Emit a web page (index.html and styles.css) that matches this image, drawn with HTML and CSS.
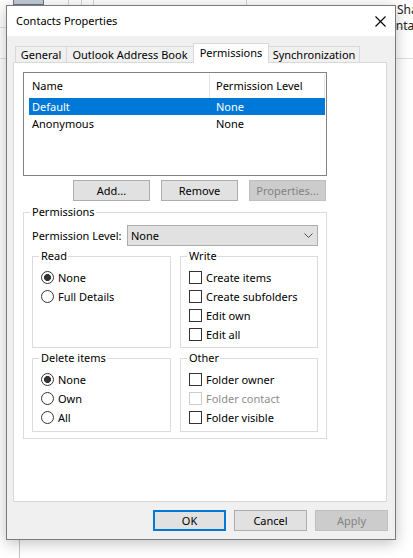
FILE: index.html
```html
<!DOCTYPE html>
<html>
<head>
<meta charset="utf-8">
<title>Contacts Properties</title>
<link rel="stylesheet" href="styles.css">
</head>
<body>
<div class="app-btn"></div>
<div class="vline v1"></div>
<div class="vline v2"></div>
<div class="vline v3"></div>
<div class="vline v4"></div>
<div class="hline h1"></div>
<div class="hline h2"></div>
<div class="app-text t1">Share</div>
<div class="app-text t2">Contacts</div>
<div class="vline-bottom"></div>

<div class="dialog">
  <div class="titlebar">
    <span class="title">Contacts Properties</span>
    <svg class="close" width="11" height="11" viewBox="0 0 11 11"><path d="M0.5 0.5 L10.5 10.5 M10.5 0.5 L0.5 10.5" stroke="#000" stroke-width="1.1" fill="none"/></svg>
  </div>
  <div class="client">
    <div class="tabs">
      <div class="tab w1">General</div>
      <div class="tab w2">Outlook Address Book</div>
      <div class="tab sel w3">Permissions</div>
      <div class="tab w4">Synchronization</div>
    </div>
    <div class="panel">
      <div class="listview">
        <div class="lv-head">
          <div class="lv-col c1">Name</div>
          <div class="lv-col c2">Permission Level</div>
        </div>
        <div class="lv-row selected"><span class="cell1">Default</span><span>None</span></div>
        <div class="lv-row"><span class="cell1">Anonymous</span><span>None</span></div>
      </div>
      <div class="btnrow">
        <div class="btn wide">Add...</div>
        <div class="btn wide">Remove</div>
        <div class="btn wide dis">Properties...</div>
      </div>
      <div class="group perm">
        <span class="legend">Permissions</span>
        <div class="level-row">
          <span>Permission Level:</span>
          <div class="combo"><span>None</span><svg class="chev" width="9" height="5" viewBox="0 0 9 5"><polyline points="0.5,0.5 4.5,4.5 8.5,0.5" fill="none" stroke="#505050" stroke-width="1"/></svg></div>
        </div>
        <div class="subgrid">
          <div class="group sub">
            <span class="legend">Read</span>
            <div class="opt"><span class="radio on"></span>None</div>
            <div class="opt"><span class="radio"></span>Full Details</div>
          </div>
          <div class="group sub">
            <span class="legend">Write</span>
            <div class="opt"><span class="check"></span>Create items</div>
            <div class="opt"><span class="check"></span>Create subfolders</div>
            <div class="opt"><span class="check"></span>Edit own</div>
            <div class="opt"><span class="check"></span>Edit all</div>
          </div>
          <div class="group sub">
            <span class="legend">Delete items</span>
            <div class="opt"><span class="radio on"></span>None</div>
            <div class="opt"><span class="radio"></span>Own</div>
            <div class="opt"><span class="radio"></span>All</div>
          </div>
          <div class="group sub">
            <span class="legend">Other</span>
            <div class="opt"><span class="check"></span>Folder owner</div>
            <div class="opt dis"><span class="check"></span>Folder contact</div>
            <div class="opt"><span class="check"></span>Folder visible</div>
          </div>
        </div>
      </div>
    </div>
    <div class="footer">
      <div class="btn fbtn def">OK</div>
      <div class="btn fbtn">Cancel</div>
      <div class="btn fbtn dis">Apply</div>
    </div>
  </div>
</div>
</body>
</html>
```

FILE: styles.css
```css
* { box-sizing: border-box; }
html, body { margin: 0; padding: 0; }
body {
  width: 413px;
  height: 558px;
  overflow: hidden;
  background: #fff;
  position: relative;
  font-family: "Noto Sans", "DejaVu Sans", sans-serif;
  font-size: 11px;
  color: #000;
}

/* underlying application (free canvas behind the dialog) */
.app-btn { position: absolute; left: 13px; top: -2px; width: 31px; height: 7px; background: #c3ccd6; border: 1px solid #6d7885; }
.vline { position: absolute; top: 0; width: 1px; height: 5px; background: #d4d4d4; }
.v1 { left: 68px; }
.v2 { left: 81px; }
.v3 { left: 93px; }
.v4 { left: 246px; }
.hline { position: absolute; left: 0; width: 413px; height: 1px; background: #e1e1e1; }
.h1 { top: 27px; }
.h2 { top: 58px; }
.app-text { position: absolute; font-size: 12px; line-height: 16px; color: #222; white-space: nowrap; }
.t1 { left: 397px; top: 2px; }
.t2 { left: 381px; top: 18px; }
.vline-bottom { position: absolute; left: 19px; top: 539px; width: 1px; height: 19px; background: #c4c4c4; }

/* dialog window */
.dialog {
  position: absolute;
  left: 6px;
  top: 5px;
  width: 390px;
  height: 535px;
  border: 1px solid #7a7a7a;
  background: #f0f0f0;
  box-shadow: 0 3px 14px rgba(0, 0, 0, .25);
  display: flex;
  flex-direction: column;
  z-index: 2;
}
.titlebar {
  flex: none;
  height: 30px;
  background: #fff;
  display: flex;
  align-items: center;
  justify-content: space-between;
  padding: 0 9px 0 9px;
}
.title { line-height: 16px; }
.close { display: block; }

.client {
  flex: 1;
  display: flex;
  flex-direction: column;
  padding: 7px 8px 8px 6px;
}

.tabs { display: flex; align-items: flex-end; height: 19px; padding-left: 2px; flex: none; }
.tab {
  height: 16px;
  border: 1px solid #d9d9d9;
  border-bottom: none;
  background: #f0f0f0;
  line-height: 14px;
  padding-top: 1px;
  text-align: center;
  margin-left: -1px;
  white-space: nowrap;
}
.tab:first-child { margin-left: 0; }
.tab.sel { height: 20px; margin-bottom: -1px; background: #fff; position: relative; z-index: 1; line-height: 16px; }
.w1 { width: 52px; }
.w2 { width: 128px; }
.w3 { width: 76px; }
.w4 { width: 92px; }

.panel {
  flex: none;
  height: 440px;
  border: 1px solid #d9d9d9;
  background: #fff;
  padding: 9px 0 0 9px;
}

.listview { width: 304px; height: 104px; border: 1px solid #828282; background: #fff; }
.lv-head { display: flex; height: 25px; }
.lv-col { margin-top: 1px; height: 24px; line-height: 24px; border-right: 1px solid #e5e5e5; white-space: nowrap; }
.c1 { width: 186px; padding-left: 8px; }
.c2 { width: 115px; padding-left: 6px; }
.lv-row { display: flex; height: 17px; line-height: 17px; margin-left: 5px; width: 296px; padding-left: 3px; }
.lv-row.selected { background: #0078d7; color: #fff; }
.cell1 { width: 184px; }

.btnrow { display: flex; gap: 11px; margin-top: 4px; padding-left: 50px; }
.btn {
  height: 21px;
  background: #e1e1e1;
  border: 1px solid #adadad;
  display: flex;
  align-items: center;
  justify-content: center;
  line-height: 16px;
  white-space: nowrap;
}
.btn.wide { width: 77px; }
.btn.dis { background: #cccccc; border-color: #bfbfbf; color: #838383; }
.btn.def { border: 2px solid #0078d7; }

.group { position: relative; border: 1px solid #dcdcdc; }
.legend {
  position: absolute;
  top: -9px;
  left: 6px;
  padding: 0 1px 0 2px;
  background: #fff;
  line-height: 16px;
  white-space: nowrap;
}
.perm {
  width: 304px;
  height: 227px;
  margin-top: 11px;
  padding: 12px 8px 6px 8px;
  display: flex;
  flex-direction: column;
}
.level-row { display: flex; justify-content: space-between; align-items: center; height: 21px; }
.combo {
  width: 191px;
  height: 21px;
  background: #e1e1e1;
  border: 1px solid #adadad;
  display: flex;
  align-items: center;
  justify-content: space-between;
  padding: 0 4px 0 3px;
  line-height: 16px;
}
.chev { display: block; }

.subgrid {
  display: grid;
  grid-template-columns: 139px 138px;
  grid-template-rows: 92px 74px;
  column-gap: 9px;
  row-gap: 10px;
  margin-top: 10px;
}
.sub { padding: 11px 0 0 8px; }

.opt { display: flex; align-items: center; height: 19px; line-height: 16px; white-space: nowrap; }
.opt.dis { color: #8d8d8d; }
.radio {
  flex: none;
  width: 13px;
  height: 13px;
  border: 1px solid #333;
  border-radius: 50%;
  margin-right: 4px;
  background: #fff;
}
.radio.on { background: radial-gradient(circle at center, #333 0, #333 3.2px, #fff 3.8px); }
.check {
  flex: none;
  width: 13px;
  height: 13px;
  border: 1px solid #333;
  margin-right: 4px;
  background: #fff;
}
.opt.dis .check { border-color: #cccccc; }

.footer { flex: none; display: flex; justify-content: flex-end; gap: 8px; margin-top: 8px; margin-right: -1px; }
.btn.fbtn { width: 73px; }
```
